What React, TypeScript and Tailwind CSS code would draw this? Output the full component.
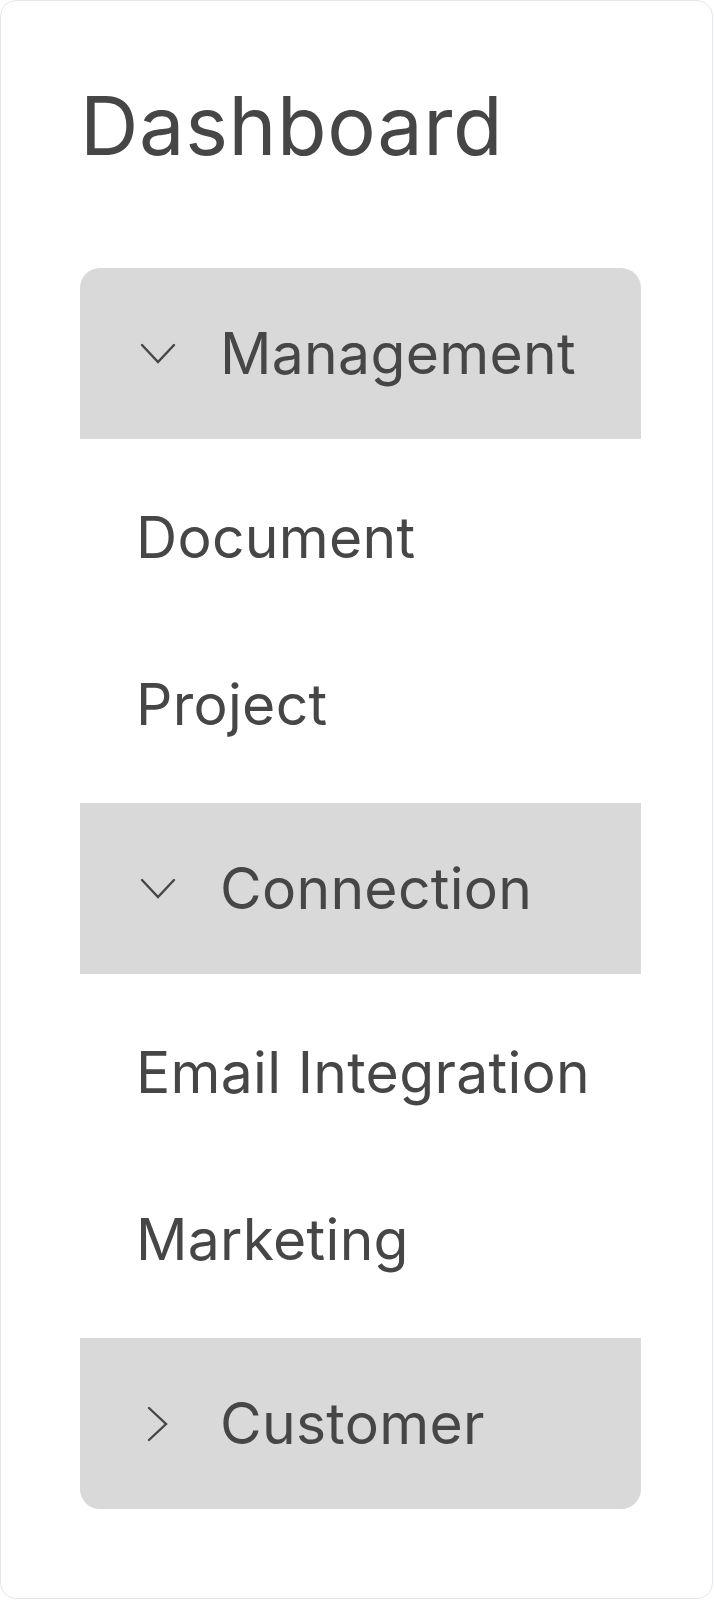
import React from 'react';

type Section = {
  title: string;
  open: boolean;
  items: string[];
};

const sections: Section[] = [
  { title: 'Management', open: true, items: ['Document', 'Project'] },
  { title: 'Connection', open: true, items: ['Email Integration', 'Marketing'] },
  { title: 'Customer', open: false, items: [] },
];

function Chevron({ open }: { open: boolean }) {
  return (
    <svg viewBox="0 0 40 40" className="w-10 h-10 shrink-0" fill="none" stroke="#464646" strokeWidth={2.4} strokeLinecap="round" strokeLinejoin="miter">
      {open ? <path d="M4 11 L20 28 L36 11" /> : <path d="M11 4 L28 20 L11 36" />}
    </svg>
  );
}

export default function App() {
  return (
    <div className="w-[713px] h-[1599px] bg-white border border-gray-200 rounded-[16px] pt-[85px] pl-[79px] text-[#464646]" style={{ fontFamily: 'Inter, "Open Sans", sans-serif' }}>
      <h1 className="text-[81px] leading-none font-normal tracking-[0.6px] mb-[101px]">Dashboard</h1>

      <div className="w-[561px]">
        {sections.map((s, i) => (
          <div key={s.title}>
            <div
              className={`h-[171px] bg-[#d9d9d9] flex items-center pl-[58px] ${i === 0 ? 'rounded-t-[20px]' : ''} ${i === sections.length - 1 ? 'rounded-b-[20px]' : ''}`}
            >
              <Chevron open={s.open} />
              <span className="ml-[42px] text-[57px] leading-none tracking-[0.3px]">{s.title}</span>
            </div>
            {s.open && (
              <div className="py-[15px]">
                {s.items.map(item => (
                  <div key={item} className="h-[167px] flex items-center pl-[56px] text-[57px] leading-none tracking-[0.3px]">
                    {item}
                  </div>
                ))}
              </div>
            )}
          </div>
        ))}
      </div>
    </div>
  );
}
